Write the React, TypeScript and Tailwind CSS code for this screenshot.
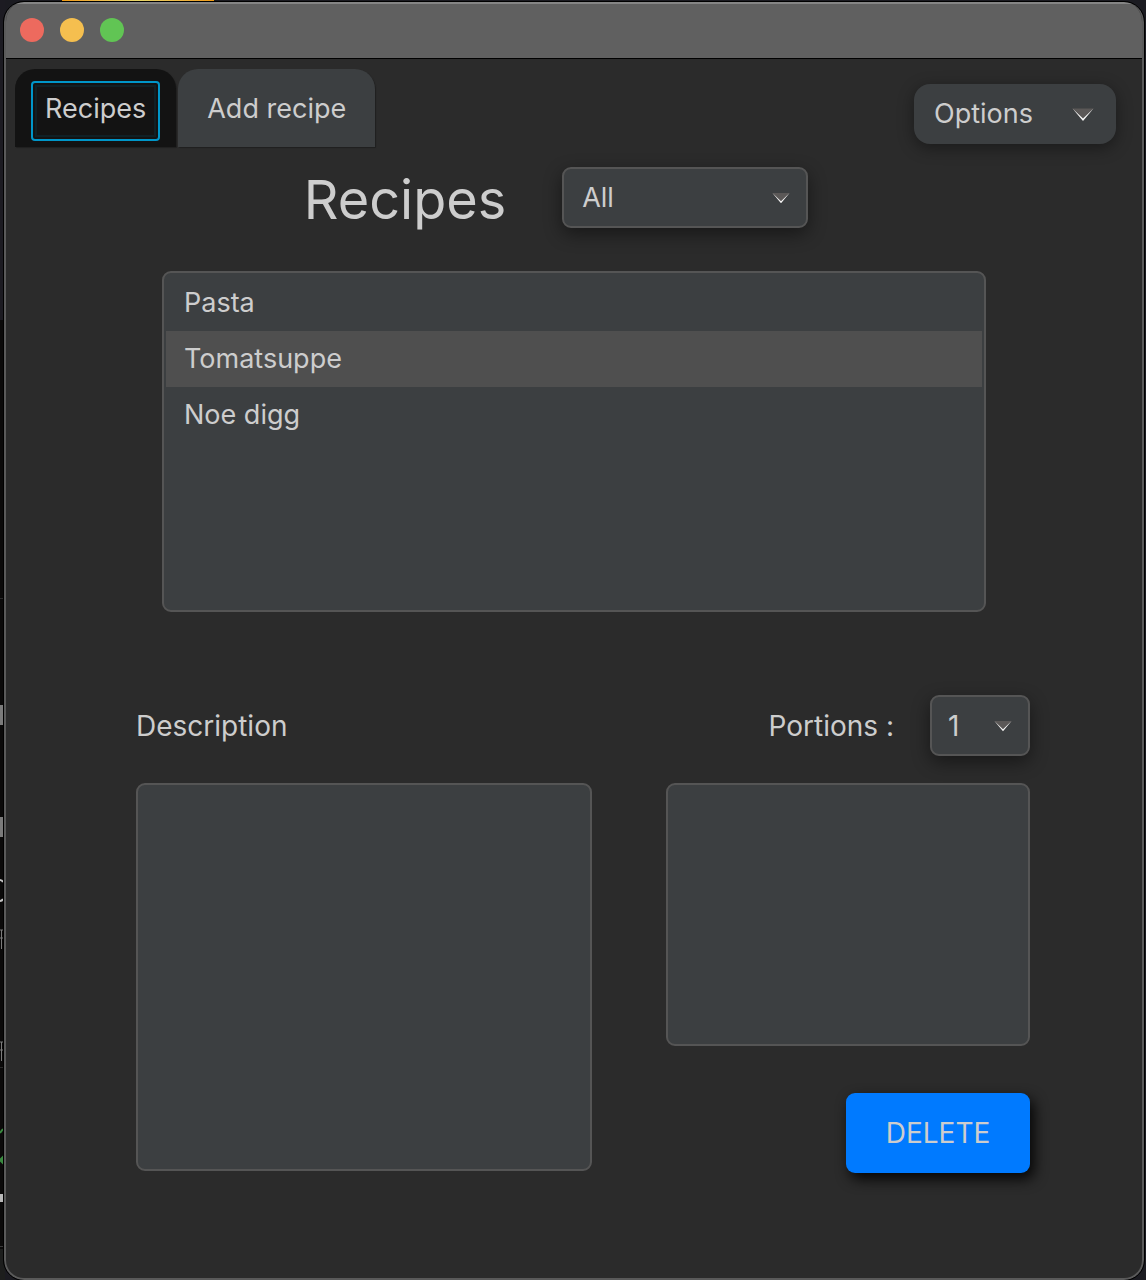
import { useState } from "react";

const recipes = ["Pasta", "Tomatsuppe", "Noe digg"];

function Arrow({ className }: { className: string }) {
  return (
    <svg aria-hidden="true" viewBox="0 0 22 13" className={className}>
      <path d="M0.5 0.5H21.5L11 12.5Z" fill="#5b5857" />
      <path d="M0.5 0.5L11 10.5L21.5 0.5L11 13Z" fill="#f6f6f6" />
    </svg>
  );
}

function Backdrop() {
  return (
    <>
      <svg aria-hidden="true" className="pointer-events-none absolute top-0 left-0 h-[1280px] w-[5px]" viewBox="0 0 5 1280">
        <rect width="5" height="1280" fill="#0b0a0a" />
        <rect width="5" height="320" fill="#1c1b22" />
        <path d="M0 598.5H4M0 1067.5H4" stroke="#2b2b2b" />
        <path d="M0 1246.5H4" stroke="#3a3a3a" />
        <rect y="1249" width="5" height="31" fill="#1d1e1d" />
        <rect y="705" width="3" height="20" fill="#7b7b7b" />
        <rect y="817" width="3" height="20" fill="#7b7b7b" />
        <path d="M0 880Q2 880 3 882M0 901Q2 901 3 899" stroke="#c4c4c4" strokeWidth="2" fill="none" />
        <path d="M0 930H3M0 938H3M1.5 930V949M0 1042H3M0 1050H3M1.5 1042V1061" stroke="#7b7b7b" strokeWidth="1" />
        <path d="M0 1133L3 1129M0 1160L3 1157V1163Z" stroke="#3a8a40" strokeWidth="2" fill="#3a8a40" />
        <rect y="1194" width="3" height="8" fill="#b9b9b9" />
      </svg>
      <div aria-hidden="true" className="absolute top-0 left-[62px] h-px w-[152px] bg-linear-to-r from-[#f09a10] via-[#e6d668] to-[#f09a10]" />
    </>
  );
}

export default function App() {
  const [selected, setSelected] = useState("Tomatsuppe");
  const [tab, setTab] = useState("Recipes");

  return (
    <div className="relative min-h-screen bg-[#1b1b21] pt-[2px] pr-[2px] pl-1 font-[Inter,sans-serif] text-[27px] leading-9 text-[#cdcdcd]">
      <Backdrop />
      <div className="relative flex min-h-[1278px] flex-col overflow-hidden rounded-[20px] border-2 border-t-0 border-[#5a5a5a] bg-[#2b2b2b] outline outline-black">
        <header className="flex h-[57px] shrink-0 items-center gap-4 border-t-2 border-b border-t-[#858585] border-b-black bg-[#606060] px-3.5 pb-0.5">
          <button aria-label="Close" className="size-6 rounded-full bg-[#ed6a5e]" />
          <button aria-label="Minimize" className="size-6 rounded-full bg-[#f5bf4f]" />
          <button aria-label="Zoom" className="size-6 rounded-full bg-[#61c554]" />
        </header>

        <div className="flex items-start justify-between pt-2.5 pr-[26px] pl-[9px]">
          <div role="tablist" className="flex gap-0.5">
            <button
              role="tab"
              aria-selected={tab === "Recipes"}
              onClick={() => setTab("Recipes")}
              className="h-[78px] rounded-t-[20px] bg-[#131313] px-4 pt-1.5 shadow-[1px_1px_1px_#202020]"
            >
              <span className="flex h-[60px] items-center rounded-[4px] border-2 border-[#0096c9] p-0.5">
                <span className="flex h-[52px] items-center border-2 border-[#102025] px-2 pb-1">Recipes</span>
              </span>
            </button>
            <button
              role="tab"
              aria-selected={tab === "Add recipe"}
              onClick={() => setTab("Add recipe")}
              className="h-[78px] rounded-t-[20px] bg-[#3c3f41] px-[29px] pt-0.5 shadow-[1px_1px_1px_#202020]"
            >
              Add recipe
            </button>
          </div>
          <button
            aria-haspopup="menu"
            className="mt-[15px] flex h-[60px] w-[202px] items-center justify-between rounded-2xl bg-[#3c3f41] pr-[22px] pl-5 shadow-[0_4px_16px_rgba(0,0,0,0.4)]"
          >
            Options
            <Arrow className="h-[13px] w-[22px]" />
          </button>
        </div>

        <main className="flex flex-col">
          <div className="flex items-center justify-center gap-14 pt-5 pr-9">
            <h1 className="pt-1 text-[54px] leading-14">Recipes</h1>
            <div className="relative">
              <select
                aria-label="Category"
                className="block h-[61px] w-[246px] appearance-none rounded-[9px] border-2 border-[#555] bg-[#3c3f41] pl-[18px] shadow-[0_6px_18px_rgba(0,0,0,0.45)]"
              >
                <option>All</option>
              </select>
              <Arrow className="pointer-events-none absolute top-[25px] right-[18px] h-[12px] w-[18px]" />
            </div>
          </div>

          <ul
            role="listbox"
            aria-label="Recipes"
            className="mt-[43px] mr-[156px] ml-[156px] h-[341px] rounded-[9px] border-2 border-[#555] bg-[#3c3f41] p-0.5"
          >
            {recipes.map((name) => (
              <li key={name} role="option" aria-selected={selected === name}>
                <button
                  onClick={() => setSelected(name)}
                  className={
                    selected === name
                      ? "block h-14 w-full bg-[#4f4f4f] px-[18px] text-left"
                      : "block h-14 w-full px-[18px] text-left"
                  }
                >
                  {name}
                </button>
              </li>
            ))}
          </ul>

          <div className="mt-[83px] mr-[112px] ml-[130px] grid grid-cols-[456fr_364fr] gap-x-[74px] gap-y-[27px] text-[28px]">
            <label htmlFor="description" className="self-center">
              Description
            </label>
            <div className="flex items-center justify-end gap-9">
              <label htmlFor="portions">Portions :</label>
              <div className="relative">
                <select
                  id="portions"
                  className="block h-[61px] w-[100px] appearance-none rounded-[9px] border-2 border-[#555] bg-[#3c3f41] pl-4 shadow-[0_6px_18px_rgba(0,0,0,0.45)]"
                >
                  <option>1</option>
                </select>
                <Arrow className="pointer-events-none absolute top-[25px] right-[18px] h-[12px] w-[18px]" />
              </div>
            </div>
            <textarea
              id="description"
              className="h-[388px] resize-none rounded-[9px] border-2 border-[#555] bg-[#3c3f41] p-4"
            />
            <div className="flex flex-col items-end gap-[47px]">
              <textarea
                aria-label="Ingredients"
                className="h-[263px] w-full resize-none rounded-[9px] border-2 border-[#555] bg-[#3c3f41] p-4"
              />
              <button className="h-20 w-[184px] rounded-[9px] bg-[#007aff] shadow-[4px_6px_14px_rgba(0,0,0,0.9)]">
                DELETE
              </button>
            </div>
          </div>
        </main>
      </div>
    </div>
  );
}
